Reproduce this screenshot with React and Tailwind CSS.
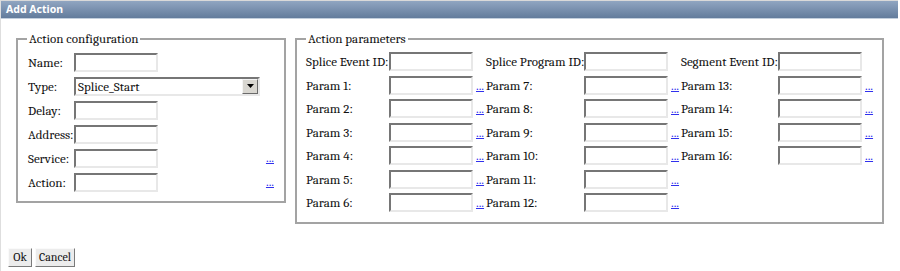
import React from "react";

function Field({ className = "w-[84px]" }) {
  return (
    <input
      type="text"
      className={
        "h-[19px] border-2 border-t-[#767676] border-l-[#767676] border-r-[#e8e8e8] border-b-[#e8e8e8] bg-white outline-none " +
        className
      }
    />
  );
}

function Dots() {
  return (
    <a href="#" className="text-[#3030ee] underline leading-[15px]">
      ...
    </a>
  );
}

function TypeSelect() {
  return (
    <div className="w-[186px] h-[19px] flex border-2 border-t-[#767676] border-l-[#767676] border-r-[#e8e8e8] border-b-[#e8e8e8] bg-white">
      <span className="flex-1 pl-[2px] leading-[15px]">Splice_Start</span>
      <span className="w-[16px] h-full flex items-center justify-center bg-[#d8d6d0] border border-t-[#f4f4f4] border-l-[#f4f4f4] border-r-[#6a6a6a] border-b-[#6a6a6a]">
        <svg width="7" height="4" viewBox="0 0 7 4">
          <path d="M0 0h7L3.5 4z" fill="#000" />
        </svg>
      </span>
    </div>
  );
}

const leftRows = [
  { label: "Name:", input: <Field /> },
  { label: "Type:", input: <TypeSelect /> },
  { label: "Delay:", input: <Field /> },
  { label: "Address:", input: <Field /> },
  { label: "Service:", input: <Field />, link: true },
  { label: "Action:", input: <Field />, link: true },
];

// each row: [label, link?] x 3 columns
const paramRows = [
  [["Splice Event ID:", false], ["Splice Program ID:", false], ["Segment Event ID:", false]],
  [["Param 1:", true], ["Param 7:", true], ["Param 13:", true]],
  [["Param 2:", true], ["Param 8:", true], ["Param 14:", true]],
  [["Param 3:", true], ["Param 9:", true], ["Param 15:", true]],
  [["Param 4:", true], ["Param 10:", true], ["Param 16:", true]],
  [["Param 5:", true], ["Param 11:", true], null],
  [["Param 6:", true], ["Param 12:", true], null],
];

export default function App() {
  return (
    <div className="w-[900px] h-[271px] bg-white border-l border-[#dedede] font-serif text-[13px] text-[#111] overflow-hidden">
      {/* title bar */}
      <div className="h-[19px] mr-[2px] border-t border-t-[#d9d9d9] border-b border-b-[#c3cfdd] bg-gradient-to-b from-[#90a5c1] to-[#637c9c] pl-[5px] flex items-center text-white font-bold font-sans text-[10.5px]">
        Add Action
      </div>

      <div className="flex items-start gap-[9px] pl-[15px] mt-[12px]">
        {/* Action configuration */}
        <fieldset className="w-[270px] border-2 border-[#a3a3a3] pl-[10px] pr-[8px] pt-[4px] pb-[7px]">
          <legend className="px-[2px] -ml-[1px] leading-[15px]">Action configuration</legend>
          {leftRows.map((r) => (
            <div key={r.label} className="h-[24px] flex items-center">
              <span className="w-[46px] leading-[15px] whitespace-nowrap">{r.label}</span>
              {r.input}
              <span className="flex-1" />
              {r.link && (
                <span className="mr-[2px]">
                  <Dots />
                </span>
              )}
            </div>
          ))}
        </fieldset>

        {/* Action parameters */}
        <fieldset className="w-[589px] border-2 border-[#a3a3a3] pl-[9px] pr-[4px] pt-[4px] pb-[7px]">
          <legend className="px-[2px] leading-[15px]">Action parameters</legend>
          <div className="grid grid-cols-[83px_86px_11px_98px_86px_11px_97px_86px_12px] auto-rows-[23.5px] items-center">
            {paramRows.map((row, i) =>
              row.map((cell, j) =>
                cell ? (
                  <React.Fragment key={i + "-" + j}>
                    <span className="leading-[15px] whitespace-nowrap">{cell[0]}</span>
                    <span>
                      <Field />
                    </span>
                    <span className="pl-[1px]">{cell[1] && <Dots />}</span>
                  </React.Fragment>
                ) : (
                  <React.Fragment key={i + "-" + j}>
                    <span />
                    <span />
                    <span />
                  </React.Fragment>
                )
              )
            )}
          </div>
        </fieldset>
      </div>

      <div className="flex gap-[3px] pl-[7px] mt-[24px]">
        <button className="w-[24px] h-[19px] bg-[#ececec] border border-t-[#fafafa] border-l-[#fafafa] border-r-[#7a7a7a] border-b-[#7a7a7a] text-[12px] leading-[15px]">
          Ok
        </button>
        <button className="w-[40px] h-[19px] bg-[#ececec] border border-t-[#fafafa] border-l-[#fafafa] border-r-[#7a7a7a] border-b-[#7a7a7a] text-[12px] leading-[15px]">
          Cancel
        </button>
      </div>
    </div>
  );
}
